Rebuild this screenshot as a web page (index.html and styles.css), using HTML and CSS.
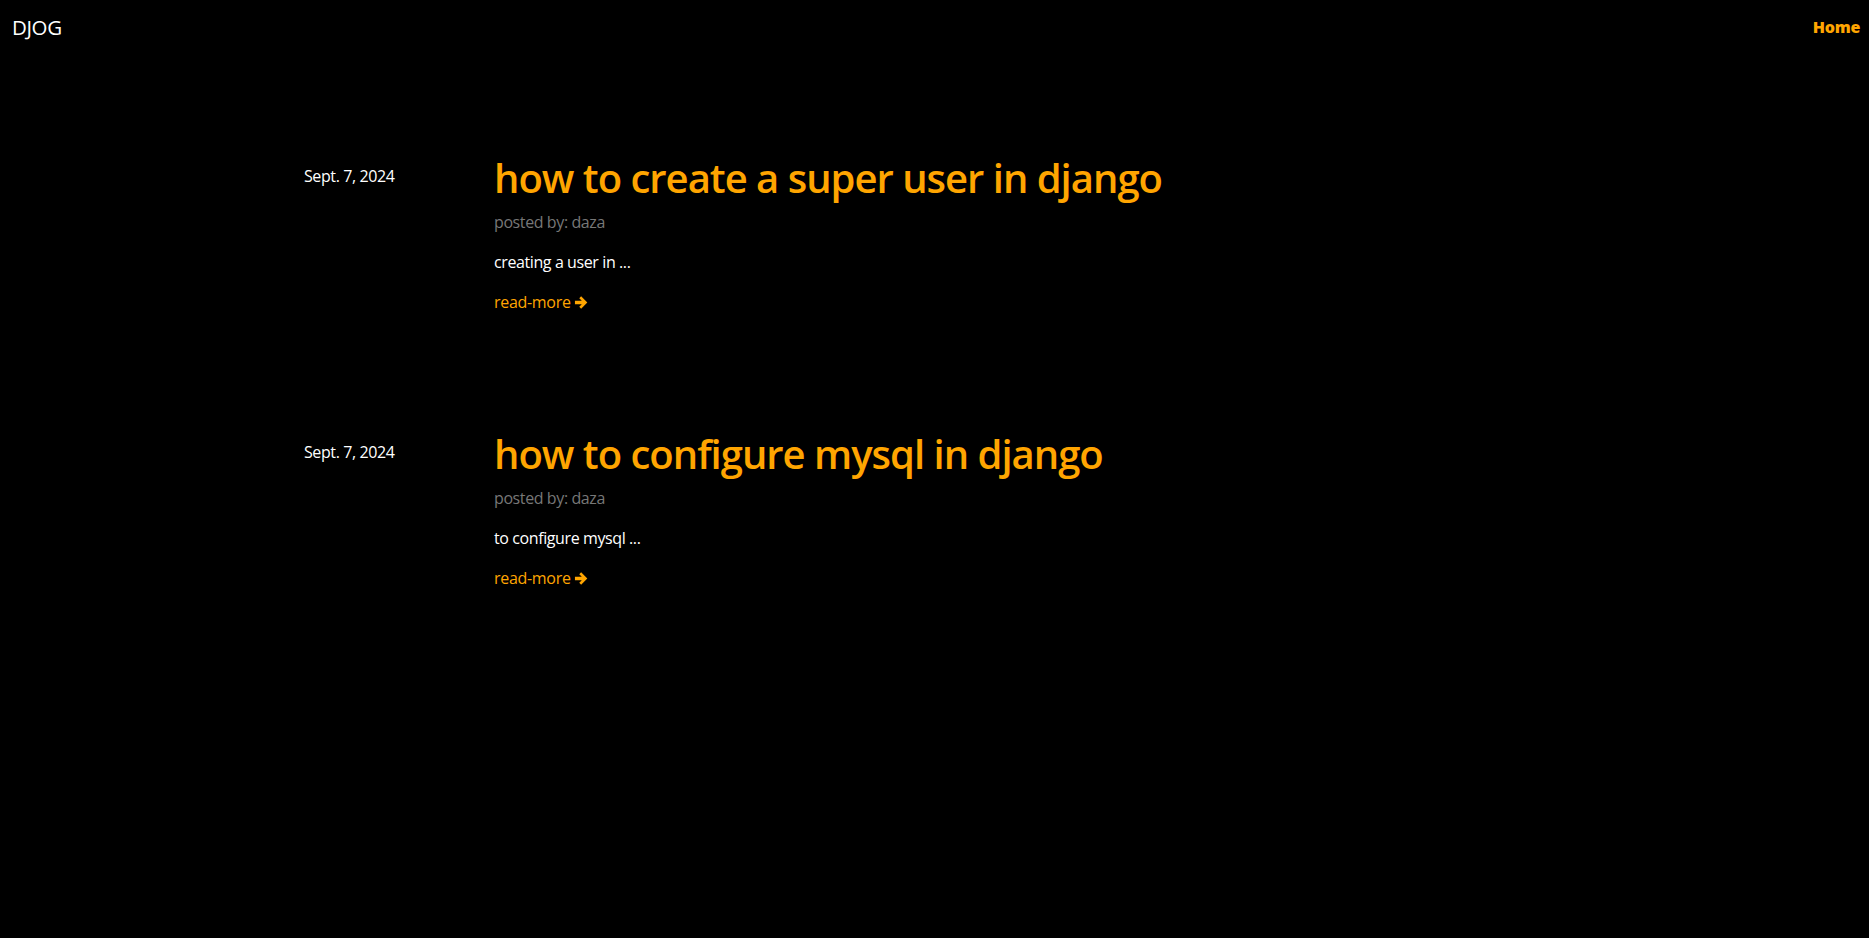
FILE: index.html
```html
<!DOCTYPE html>
<html lang="en">
<head>
<meta charset="utf-8">
<title>DJOG</title>
<link rel="stylesheet" href="styles.css">
</head>
<body>
<nav class="navbar">
  <a class="brand" href="#">DJOG</a>
  <a class="nav-link" href="#">Home</a>
</nav>
<main class="posts">
  <article class="post">
    <div class="post-date">Sept. 7, 2024</div>
    <div class="post-body">
      <h1 class="post-title">how to create a super user in django</h1>
      <p class="post-author">posted by: daza</p>
      <p class="post-excerpt">creating a user in ...</p>
      <a class="read-more" href="#">read-more <svg class="arrow" viewBox="0 0 16 16" aria-hidden="true"><path d="M1 6.1H8.3L5.6 3.4L7.6 1.4L14.2 8L7.6 14.6L5.6 12.6L8.3 9.9H1Z"/></svg></a>
    </div>
  </article>
  <article class="post">
    <div class="post-date">Sept. 7, 2024</div>
    <div class="post-body">
      <h1 class="post-title">how to configure mysql in django</h1>
      <p class="post-author">posted by: daza</p>
      <p class="post-excerpt">to configure mysql ...</p>
      <a class="read-more" href="#">read-more <svg class="arrow" viewBox="0 0 16 16" aria-hidden="true"><path d="M1 6.1H8.3L5.6 3.4L7.6 1.4L14.2 8L7.6 14.6L5.6 12.6L8.3 9.9H1Z"/></svg></a>
    </div>
  </article>
</main>
</body>
</html>
```

FILE: styles.css
```css
html, body {
  margin: 0;
  background: #000;
  color: #fff;
  font-family: "Open Sans", "Noto Sans", sans-serif;
  font-size: 16px;
  line-height: 1.5;
}

a {
  text-decoration: none;
}

.navbar {
  display: flex;
  justify-content: space-between;
  align-items: flex-start;
  height: 56px;
  padding: 0 9px 0 12px;
}

.brand {
  color: #fff;
  font-size: 20.5px;
  line-height: 30px;
  margin-top: 12px;
  letter-spacing: -0.4px;
}

.nav-link {
  color: #ffa500;
  font-weight: 800;
  font-size: 16px;
  line-height: 24px;
  margin-top: 15px;
  letter-spacing: -0.3px;
}

.posts {
  padding: 98px 0 0 304px;
}

.post {
  display: flex;
  margin-bottom: 116px;
}

.post-date {
  flex: 0 0 190px;
  padding-top: 10px;
  letter-spacing: -0.4px;
}

.post-body {
  flex: 1;
}

.post-title {
  margin: 0 0 8px;
  color: #ffa500;
  font-size: 40px;
  font-weight: 600;
  line-height: 1.2;
  letter-spacing: -1px;
}

.post-author {
  margin: 0 0 16px;
  color: #777;
  letter-spacing: -0.4px;
}

.post-excerpt {
  margin: 0 0 16px;
  letter-spacing: -0.4px;
}

.read-more {
  color: #ffa500;
  letter-spacing: -0.3px;
}

.arrow {
  width: 15px;
  height: 15px;
  fill: #ffa500;
  vertical-align: -2px;
}
```
